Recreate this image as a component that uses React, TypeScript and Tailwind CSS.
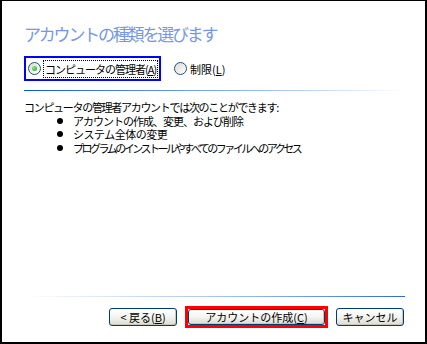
import React from 'react';

const jp = { fontFamily: '"Noto Sans CJK JP", "Noto Sans", sans-serif' };

const Radio = ({ checked }: { checked?: boolean }) => (
  <span className="relative flex h-[13px] w-[13px] shrink-0 items-center justify-center rounded-full border border-[#1c5180] bg-gradient-to-br from-[#dcdcd6] to-white">
    {checked && (
      <span className="h-[5px] w-[5px] rounded-full bg-[radial-gradient(circle_at_35%_35%,#8de88d,#21a121)]" />
    )}
  </span>
);

const XpButton = ({ children, className = '' }: { children: React.ReactNode; className?: string }) => (
  <button
    className={`flex items-center justify-center rounded-[3px] border border-[#003c74] bg-gradient-to-b from-white via-[#f4f4f0] to-[#dcdcd4] text-[11px] leading-none text-black shadow-[inset_-1px_-1px_0_#c9c7ba] ${className}`}
  >
    {children}
  </button>
);

// per-line tracking so the widths come close to the bitmap font in the shot
const bullets = [
  { text: 'アカウントの作成、変更、および削除', track: 'tracking-[-1px]' },
  { text: 'システム全体の変更', track: 'tracking-[-0.5px]' },
  { text: 'プログラムのインストールやすべてのファイルへのアクセス', track: 'tracking-[-2.5px]' },
];

export default function App() {
  return (
    <div className="h-[344px] w-[427px] bg-black pb-[2px] pl-[2px] pr-[2px] pt-[1px]" style={jp}>
      <div className="flex h-full flex-col bg-white pl-[22px] pr-[20px] pt-[21px]">
        <h1 className="text-[17px] font-normal leading-[24px] tracking-[-2.2px] text-[#7597e6]">
          アカウントの種類を選びます
        </h1>

        <div className="mt-[10px] flex items-center">
          <div className="flex h-[25px] w-[137px] items-center gap-[2px] border-2 border-[#0000ff] pl-[2px]">
            <Radio checked />
            <span className="border border-dotted border-black px-[1px] text-[11px] leading-[16px] tracking-[-1px] text-black">
              コンピュータの管理者(<span className="underline">A</span>)
            </span>
          </div>
          <div className="ml-[13px] flex items-center gap-[3px]">
            <Radio />
            <span className="text-[11px] leading-[16px] tracking-[0px] text-black">
              制限(<span className="underline">L</span>)
            </span>
          </div>
        </div>

        <div className="mt-[9px] h-[1px] w-full bg-gradient-to-r from-[#0058de] via-[#7aa6f0] to-white" />

        <div className="mt-[9px] text-[11px] leading-[14px] text-black">
          <p className="tracking-[-1.3px]">コンピュータの管理者アカウントでは次のことができます:</p>
          <ul>
            {bullets.map((b) => (
              <li key={b.text} className="flex h-[13.5px] items-center">
                <span className="ml-[33px] mr-[10px] h-[6px] w-[6px] shrink-0 rounded-full bg-black" />
                <span className={b.track}>{b.text}</span>
              </li>
            ))}
          </ul>
        </div>

        <div className="mt-auto h-[1px] w-full bg-gradient-to-r from-white via-[#a9c4f0] to-[#2e6ad8]" />

        <div className="mb-[14px] mt-[9px] flex items-center justify-end pr-[1px]">
          <XpButton className="h-[18px] w-[68px]">
            &lt; 戻る(<span className="underline">B</span>)
          </XpButton>
          <div className="ml-[8px] border-[3px] border-[#ff0000]">
            <XpButton className="h-[16px] w-[137px]">
              アカウントの作成(<span className="underline">C</span>)
            </XpButton>
          </div>
          <XpButton className="ml-[8px] h-[18px] w-[68px]">キャンセル</XpButton>
        </div>
      </div>
    </div>
  );
}
